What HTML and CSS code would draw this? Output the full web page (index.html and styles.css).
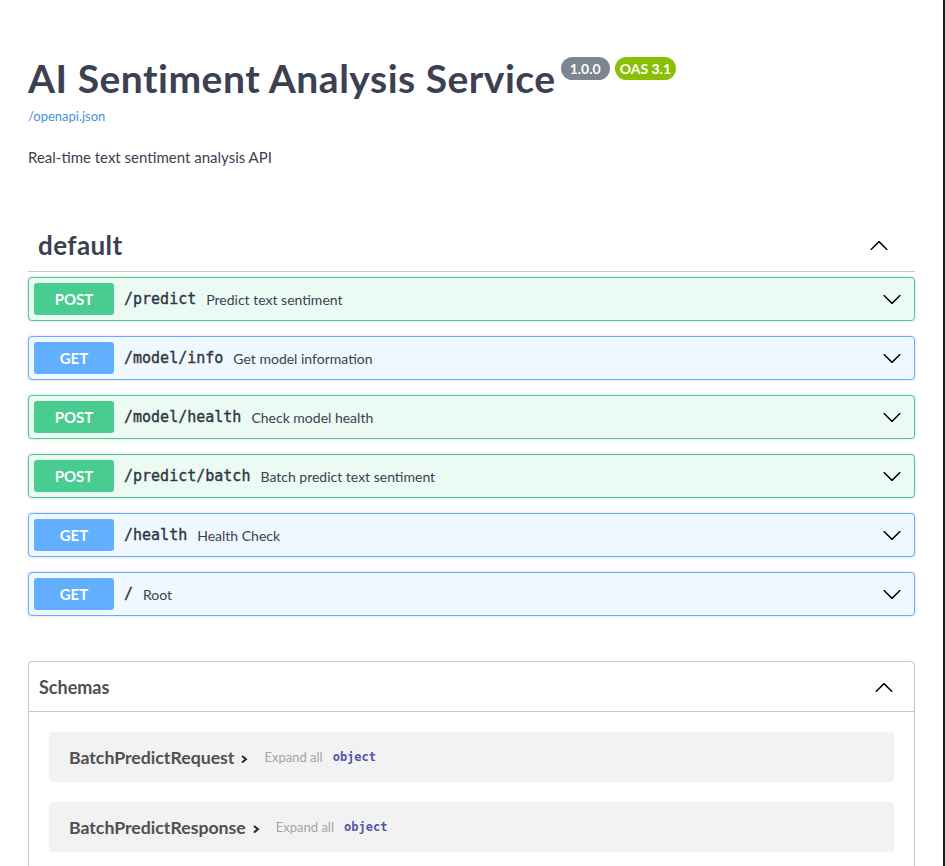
FILE: index.html
```html
<!DOCTYPE html>
<html lang="en">
<head>
<meta charset="utf-8">
<title>AI Sentiment Analysis Service</title>
<link rel="stylesheet" href="styles.css">
</head>
<body>
<div class="edge"></div>
<div class="wrapper">
  <section class="info">
    <div class="title-row">
      <h2 class="title">AI Sentiment Analysis Service</h2>
      <span class="badge version">1.0.0</span>
      <span class="badge oas">OAS 3.1</span>
    </div>
    <a class="spec-link" href="#">/openapi.json</a>
    <p class="description">Real-time text sentiment analysis API</p>
  </section>

  <section class="tag-section">
    <h3 class="tag-header">
      <span class="tag-name">default</span>
      <svg class="arrow" viewBox="0 0 20 20" width="20" height="20"><path d="M17.418 14.908c.272.268.709.268.979 0s.271-.701 0-.969l-7.908-7.83c-.27-.268-.707-.268-.979 0l-7.908 7.83c-.27.268-.27.701 0 .969.271.268.709.268.979 0L10 7.767l7.418 7.141z"/></svg>
    </h3>

    <div class="opblock post">
      <span class="method">POST</span>
      <span class="path">/predict</span>
      <span class="summary">Predict text sentiment</span>
      <svg class="arrow down" viewBox="0 0 20 20" width="20" height="20"><path d="M17.418 6.109c.272-.268.709-.268.979 0s.271.701 0 .969l-7.908 7.83c-.27.268-.707.268-.979 0l-7.908-7.83c-.27-.268-.27-.701 0-.969.271-.268.709-.268.979 0L10 13.25l7.418-7.141z"/></svg>
    </div>
    <div class="opblock get">
      <span class="method">GET</span>
      <span class="path">/model/info</span>
      <span class="summary">Get model information</span>
      <svg class="arrow down" viewBox="0 0 20 20" width="20" height="20"><path d="M17.418 6.109c.272-.268.709-.268.979 0s.271.701 0 .969l-7.908 7.83c-.27.268-.707.268-.979 0l-7.908-7.83c-.27-.268-.27-.701 0-.969.271-.268.709-.268.979 0L10 13.25l7.418-7.141z"/></svg>
    </div>
    <div class="opblock post">
      <span class="method">POST</span>
      <span class="path">/model/health</span>
      <span class="summary">Check model health</span>
      <svg class="arrow down" viewBox="0 0 20 20" width="20" height="20"><path d="M17.418 6.109c.272-.268.709-.268.979 0s.271.701 0 .969l-7.908 7.83c-.27.268-.707.268-.979 0l-7.908-7.83c-.27-.268-.27-.701 0-.969.271-.268.709-.268.979 0L10 13.25l7.418-7.141z"/></svg>
    </div>
    <div class="opblock post">
      <span class="method">POST</span>
      <span class="path">/predict/batch</span>
      <span class="summary">Batch predict text sentiment</span>
      <svg class="arrow down" viewBox="0 0 20 20" width="20" height="20"><path d="M17.418 6.109c.272-.268.709-.268.979 0s.271.701 0 .969l-7.908 7.83c-.27.268-.707.268-.979 0l-7.908-7.83c-.27-.268-.27-.701 0-.969.271-.268.709-.268.979 0L10 13.25l7.418-7.141z"/></svg>
    </div>
    <div class="opblock get">
      <span class="method">GET</span>
      <span class="path">/health</span>
      <span class="summary">Health Check</span>
      <svg class="arrow down" viewBox="0 0 20 20" width="20" height="20"><path d="M17.418 6.109c.272-.268.709-.268.979 0s.271.701 0 .969l-7.908 7.83c-.27.268-.707.268-.979 0l-7.908-7.83c-.27-.268-.27-.701 0-.969.271-.268.709-.268.979 0L10 13.25l7.418-7.141z"/></svg>
    </div>
    <div class="opblock get">
      <span class="method">GET</span>
      <span class="path">/</span>
      <span class="summary">Root</span>
      <svg class="arrow down" viewBox="0 0 20 20" width="20" height="20"><path d="M17.418 6.109c.272-.268.709-.268.979 0s.271.701 0 .969l-7.908 7.83c-.27.268-.707.268-.979 0l-7.908-7.83c-.27-.268-.27-.701 0-.969.271-.268.709-.268.979 0L10 13.25l7.418-7.141z"/></svg>
    </div>
  </section>

  <section class="models">
    <h4 class="models-header">
      <span>Schemas</span>
      <svg class="arrow" viewBox="0 0 20 20" width="20" height="20"><path d="M17.418 14.908c.272.268.709.268.979 0s.271-.701 0-.969l-7.908-7.83c-.27-.268-.707-.268-.979 0l-7.908 7.83c-.27.268-.27.701 0 .969.271.268.709.268.979 0L10 7.767l7.418 7.141z"/></svg>
    </h4>
    <div class="model-container">
      <span class="model-title">BatchPredictRequest</span>
      <svg class="model-toggle" viewBox="0 0 10 10" width="10" height="10"><path d="M3 2 L7 5.2 L3 8.4" fill="none" stroke="#222" stroke-width="1.9"/></svg>
      <span class="expand-all">Expand all</span>
      <span class="prop-type">object</span>
    </div>
    <div class="model-container">
      <span class="model-title">BatchPredictResponse</span>
      <svg class="model-toggle" viewBox="0 0 10 10" width="10" height="10"><path d="M3 2 L7 5.2 L3 8.4" fill="none" stroke="#222" stroke-width="1.9"/></svg>
      <span class="expand-all">Expand all</span>
      <span class="prop-type">object</span>
    </div>
  </section>
</div>
</body>
</html>
```

FILE: styles.css
```css
html, body {
  margin: 0;
  padding: 0;
  background: #fff;
}

body {
  font-family: "Lato", "Noto Sans", sans-serif;
  color: #3b4151;
  overflow: hidden;
}

.edge {
  position: fixed;
  top: 0;
  right: 0;
  width: 2px;
  height: 100%;
  background: #1e1e1e;
}

.wrapper {
  margin: 0 30px 0 28px;
}

/* info */
.info {
  padding-top: 55px;
  margin-bottom: 48px;
}

.title-row {
  display: flex;
  align-items: flex-start;
}

.title {
  margin: 0;
  font-size: 39px;
  font-weight: 700;
  line-height: 46px;
  letter-spacing: 0.5px;
  color: #3b4151;
}

.badge {
  margin-top: 2px;
  margin-left: 5px;
  padding: 2px 5px;
  border-radius: 57px;
  color: #fff;
  font-size: 14px;
  font-weight: 700;
  line-height: 19px;
}

.version {
  padding: 2px 9px;
  background: #7d8492;
}

.oas {
  background: #89bf04;
}

.spec-link {
  display: block;
  margin-top: 7px;
  font-size: 13px;
  line-height: 17px;
  color: #4990e2;
  text-decoration: none;
}

.description {
  margin: 22px 0 0;
  font-size: 15px;
  line-height: 20px;
}

/* tag */
.tag-header {
  display: flex;
  align-items: center;
  justify-content: space-between;
  margin: 0 0 5px;
  padding: 12px 26px 8px 10px;
  border-bottom: 1px solid rgba(59, 65, 81, 0.3);
  font-size: 26px;
  line-height: 36px;
  letter-spacing: 0.4px;
  font-weight: 700;
}

.arrow {
  fill: #000;
  flex: none;
}

.opblock {
  display: flex;
  align-items: center;
  margin: 0 0 15px;
  padding: 5px 12px 5px 5px;
  border: 1px solid;
  border-radius: 4px;
  box-shadow: 0 0 3px rgba(0, 0, 0, 0.19);
}

.opblock.post {
  border-color: #49cc90;
  background: #ecfaf4;
}

.opblock.get {
  border-color: #61affe;
  background: #eff7ff;
}

.method {
  flex: none;
  width: 80px;
  padding: 6px 0;
  border-radius: 3px;
  text-align: center;
  color: #fff;
  font-size: 15px;
  line-height: 20px;
  font-weight: 700;
}

.post .method {
  background: #49cc90;
}

.get .method {
  background: #61affe;
}

.path {
  padding: 0 10px;
  font-family: "DejaVu Sans Mono", monospace;
  font-size: 15px;
  font-weight: 400;
  color: #2f3441;
  -webkit-text-stroke: 0.35px #2f3441;
}

.summary {
  flex: 1;
  font-size: 14px;
  color: #3b4151;
}

/* models */
.models {
  margin-top: 45px;
  border: 1px solid rgba(59, 65, 81, 0.3);
  border-radius: 4px;
  padding-bottom: 20px;
}

.models-header {
  display: flex;
  align-items: center;
  justify-content: space-between;
  margin: 0;
  padding: 10px 20px 10px 10px;
  height: 29px;
  border-bottom: 1px solid rgba(59, 65, 81, 0.3);
  font-size: 18px;
  font-weight: 700;
  color: #505050;
}

.model-container {
  display: flex;
  align-items: center;
  height: 50px;
  margin: 20px 20px 0;
  padding: 0 20px;
  border-radius: 4px;
  background: rgba(0, 0, 0, 0.05);
}

.model-title {
  font-size: 17.7px;
  font-weight: 700;
  color: #505050;
}

.model-toggle {
  margin: 3px 0 0 5px;
}

.expand-all {
  margin-left: 15px;
  font-size: 13px;
  color: #a5a5a5;
}

.prop-type {
  margin-left: 10px;
  font-family: "DejaVu Sans Mono", monospace;
  font-size: 12px;
  font-weight: 700;
  color: #55a;
}
```
